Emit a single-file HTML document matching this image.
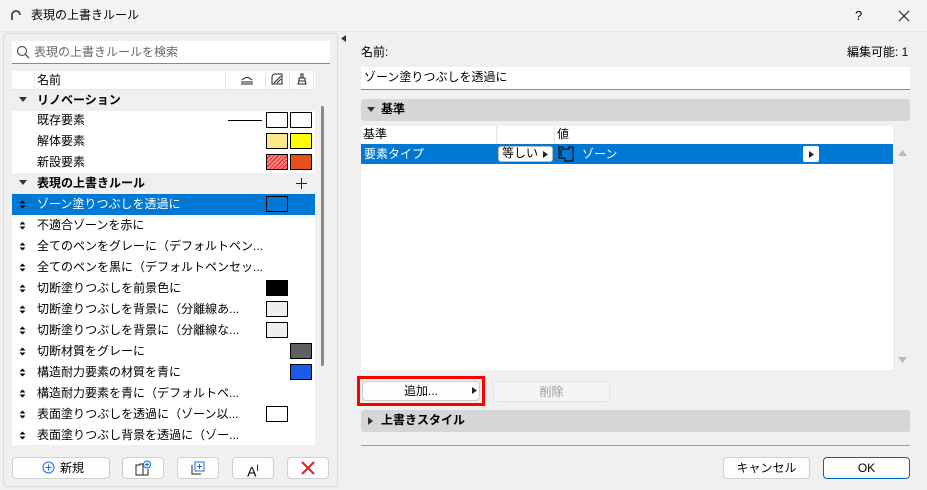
<!DOCTYPE html>
<html><head><meta charset="utf-8"><style>
*{box-sizing:border-box;margin:0;padding:0}
body{width:927px;height:490px;overflow:hidden;background:#f0f0f0;font-family:"Liberation Sans","Noto Sans CJK JP",sans-serif;font-size:12px;color:#000;position:relative}
.a{position:absolute}
.t{position:absolute;white-space:nowrap;line-height:21px}
.row{position:absolute;left:12px;width:303px;height:21px}
.sw{position:absolute;width:22px;height:16px;border:1px solid #000}
.btn{position:absolute;background:#fdfdfd;border:1px solid #d0d0d0;border-radius:4px;text-align:center;line-height:20px}
.ud{position:absolute;left:19px;width:7px;height:9px}
</style></head><body>
<svg width="0" height="0" style="position:absolute"><defs><symbol id="ud" viewBox="0 0 7 9"><path d="M0.5 3.5L3.5 0.5L6.5 3.5Z M0.5 5.5L3.5 8.5L6.5 5.5Z" fill="#000"/></symbol></defs></svg>
<!-- title bar -->
<div class="a" style="left:0;top:0;width:927px;height:32px;background:#f3f3f3;border-bottom:1px solid #e6e6e6"></div>
<svg class="a" style="left:10px;top:9px" width="12" height="12"><path d="M2 11 V6 A4 4 0 0 1 10 6" fill="none" stroke="#444" stroke-width="1.8"/></svg>
<div class="t" style="left:31px;top:5px">表現の上書きルール</div>
<div class="t" style="left:855px;top:5px;font-size:13px">?</div>
<svg class="a" style="left:898px;top:10px" width="12" height="12"><path d="M1 1L11 11M11 1L1 11" stroke="#222" stroke-width="1.2"/></svg>

<!-- left panel -->
<div class="a" style="left:3px;top:33px;width:335px;height:454px;border:1px solid #dadada;border-radius:4px;background:#f0f0f0"></div>
<div class="a" style="left:12px;top:41px;width:318px;height:23px;background:#fff;border-bottom:1px solid #888"></div>
<svg class="a" style="left:16px;top:45px" width="14" height="14"><circle cx="6" cy="6" r="4.5" fill="none" stroke="#555" stroke-width="1.2"/><path d="M9.5 9.5L13 13" stroke="#555" stroke-width="1.3"/></svg>
<div class="t" style="left:34px;top:42px;color:#666">表現の上書きルールを検索</div>
<div class="a" style="left:12px;top:71px;width:303px;height:374px;background:#fff"></div>
<div class="a" style="left:12px;top:71px;width:303px;height:19px;background:#fff;border-bottom:1px solid #e5e5e5"></div>
<div class="a" style="left:34px;top:71px;width:1px;height:19px;background:#e5e5e5"></div>
<div class="a" style="left:225px;top:71px;width:1px;height:19px;background:#e5e5e5"></div>
<div class="a" style="left:265px;top:71px;width:1px;height:19px;background:#e5e5e5"></div>
<div class="a" style="left:289px;top:71px;width:1px;height:19px;background:#e5e5e5"></div>
<div class="a" style="left:313px;top:71px;width:1px;height:19px;background:#e5e5e5"></div>
<div class="t" style="left:37px;top:70px">名前</div>
<svg class="a" style="left:240px;top:74px" width="14" height="11"><path d="M2 6Q7 1 12 6M1 8H13M1 10H13" fill="none" stroke="#222" stroke-width="1"/></svg>
<svg class="a" style="left:271px;top:73px" width="12" height="12"><path d="M1 11V4A3 3 0 0 1 4 1H11V11Z M3 10L10 3M6 10L10 6" fill="none" stroke="#222" stroke-width="1"/></svg>
<svg class="a" style="left:297px;top:73px" width="10" height="12"><path d="M4 1H6V5H4Z M2 5H8V8H2Z M2 8L1 11H9L8 8" fill="none" stroke="#222" stroke-width="1"/></svg>

<div class="row" style="top:90px;background:#efefef"></div>
<svg class="a" style="left:19px;top:97px" width="8" height="6"><path d="M0 0H8L4 5Z" fill="#333"/></svg>
<div class="t" style="left:37px;top:90px;font-weight:bold">リノベーション</div>
<div class="t" style="left:37px;top:110px">既存要素</div>
<div class="a" style="left:228px;top:120px;width:34px;height:1px;background:#000"></div>
<div class="sw" style="left:266px;top:112px;background:#fff"></div><div class="sw" style="left:290px;top:112px;background:#fff"></div>
<div class="t" style="left:37px;top:131px">解体要素</div>
<div class="sw" style="left:266px;top:133px;background:#fbe98a"></div><div class="sw" style="left:290px;top:133px;background:#ffff00"></div>
<div class="t" style="left:37px;top:152px">新設要素</div>
<div class="sw" style="left:266px;top:154px;background:repeating-linear-gradient(135deg,#ff8080 0 2px,#e02020 2px 3px)"></div><div class="sw" style="left:290px;top:154px;background:#e8501a"></div>
<div class="row" style="top:173px;background:#efefef"></div>
<svg class="a" style="left:19px;top:180px" width="8" height="6"><path d="M0 0H8L4 5Z" fill="#333"/></svg>
<div class="t" style="left:37px;top:173px;font-weight:bold">表現の上書きルール</div>
<svg class="a" style="left:296px;top:178px" width="11" height="11"><path d="M5.5 0V11M0 5.5H11" stroke="#222" stroke-width="1"/></svg>
<div class="row" style="top:194px;background:#0078d4"></div>
<svg class="ud" style="top:200px"><use href="#ud"/></svg>
<div class="t" style="left:37px;top:194px;color:#fff">ゾーン塗りつぶしを透過に</div>
<div class="sw" style="left:266px;top:196px;background:#0078d4"></div>

<svg class="ud" style="top:221px"><use href="#ud"/></svg><div class="t" style="left:37px;top:215px">不適合ゾーンを赤に</div>
<svg class="ud" style="top:242px"><use href="#ud"/></svg><div class="t" style="left:37px;top:236px">全てのペンをグレーに（デフォルトペン...</div>
<svg class="ud" style="top:263px"><use href="#ud"/></svg><div class="t" style="left:37px;top:257px">全てのペンを黒に（デフォルトペンセッ...</div>
<svg class="ud" style="top:284px"><use href="#ud"/></svg><div class="t" style="left:37px;top:278px">切断塗りつぶしを前景色に</div>
<div class="sw" style="left:266px;top:280px;background:#000"></div>
<svg class="ud" style="top:305px"><use href="#ud"/></svg><div class="t" style="left:37px;top:299px">切断塗りつぶしを背景に（分離線あ...</div>
<div class="sw" style="left:266px;top:301px;background:#eee"></div>
<svg class="ud" style="top:326px"><use href="#ud"/></svg><div class="t" style="left:37px;top:320px">切断塗りつぶしを背景に（分離線な...</div>
<div class="sw" style="left:266px;top:322px;background:#eee"></div>
<svg class="ud" style="top:347px"><use href="#ud"/></svg><div class="t" style="left:37px;top:341px">切断材質をグレーに</div>
<div class="sw" style="left:290px;top:343px;background:#606060"></div>
<svg class="ud" style="top:368px"><use href="#ud"/></svg><div class="t" style="left:37px;top:362px">構造耐力要素の材質を青に</div>
<div class="sw" style="left:290px;top:364px;background:#1a5ce8"></div>
<svg class="ud" style="top:389px"><use href="#ud"/></svg><div class="t" style="left:37px;top:383px">構造耐力要素を青に（デフォルトペ...</div>
<svg class="ud" style="top:410px"><use href="#ud"/></svg><div class="t" style="left:37px;top:404px">表面塗りつぶしを透過に（ゾーン以...</div>
<div class="sw" style="left:266px;top:406px;background:#fff"></div>
<svg class="ud" style="top:431px"><use href="#ud"/></svg><div class="t" style="left:37px;top:425px">表面塗りつぶし背景を透過に（ゾー...</div>
<div class="a" style="left:321px;top:106px;width:3px;height:260px;background:#8a8a8a;border-radius:2px"></div>

<div class="btn" style="left:12px;top:457px;width:98px;height:22px;padding-left:4px"><svg width="13" height="13" style="vertical-align:-2px;margin-right:5px"><circle cx="6.5" cy="6.5" r="5.5" fill="none" stroke="#1a6ee0"/><path d="M6.5 3.5V9.5M3.5 6.5H9.5" stroke="#1a6ee0"/></svg>新規</div>
<div class="btn" style="left:122px;top:457px;width:42px;height:22px"><svg width="16" height="16" style="margin-top:2px"><path d="M1 5H5V4H8V15H1Z" fill="none" stroke="#222"/><path d="M1 15H13V9" fill="none" stroke="#222"/><circle cx="12" cy="4.5" r="3.5" fill="none" stroke="#1a6ee0"/><path d="M12 2.5V6.5M10 4.5H14" stroke="#1a6ee0"/></svg></div>
<div class="btn" style="left:177px;top:457px;width:42px;height:22px"><svg width="16" height="16" style="margin-top:2px"><path d="M2 5V14H11" fill="none" stroke="#222"/><rect x="5" y="2" width="9" height="9" fill="none" stroke="#1a6ee0"/><path d="M9.5 4V9M7 6.5H12" stroke="#1a6ee0"/></svg></div>
<div class="btn" style="left:232px;top:457px;width:42px;height:22px;font-size:14px">A<sup style="font-size:9px">I</sup></div>
<div class="btn" style="left:287px;top:457px;width:42px;height:22px"><svg width="14" height="14" style="margin-top:3px"><path d="M1 1L13 13M13 1L1 13" stroke="#e02020" stroke-width="2"/></svg></div>

<!-- right panel -->
<svg class="a" style="left:341px;top:35px" width="5" height="7"><path d="M5 0V7L0 3.5Z" fill="#333"/></svg>
<div class="t" style="left:361px;top:42px">名前:</div>
<div class="t" style="left:847px;top:42px">編集可能: 1</div>
<div class="a" style="left:361px;top:67px;width:549px;height:23px;background:#fff;border-bottom:1px solid #888"></div>
<div class="t" style="left:364px;top:67px">ゾーン塗りつぶしを透過に</div>
<div class="a" style="left:361px;top:99px;width:549px;height:22px;background:#d6d6d6;border-radius:3px"></div>
<svg class="a" style="left:367px;top:107px" width="8" height="6"><path d="M0 0H8L4 5Z" fill="#333"/></svg>
<div class="t" style="left:381px;top:99px;font-weight:bold">基準</div>
<div class="a" style="left:361px;top:126px;width:532px;height:244px;background:#fff"></div>
<div class="a" style="left:496px;top:126px;width:1px;height:18px;background:#e5e5e5"></div>
<div class="a" style="left:554px;top:126px;width:1px;height:18px;background:#e5e5e5"></div>
<div class="t" style="left:363px;top:124px">基準</div>
<div class="t" style="left:557px;top:124px">値</div>
<div class="a" style="left:361px;top:144px;width:532px;height:20px;background:#0078d4"></div>
<div class="t" style="left:364px;top:144px;color:#fff">要素タイプ</div>
<div class="a" style="left:498px;top:146px;width:55px;height:16px;background:#fff;border-radius:3px;border:1px solid #bbb"></div>
<div class="t" style="left:502px;top:143px">等しい</div>
<svg class="a" style="left:543px;top:151px" width="5" height="7"><path d="M0 0V7L5 3.5Z" fill="#222"/></svg>
<svg class="a" style="left:558px;top:146px" width="16" height="16"><path d="M1 1H5V3H11V1H15V15H7V12H1Z M3 3V10" fill="none" stroke="#111" stroke-width="1.2"/></svg>
<div class="t" style="left:582px;top:144px;color:#fff">ゾーン</div>
<div class="a" style="left:803px;top:146px;width:16px;height:16px;background:#fff;border-radius:2px"></div>
<svg class="a" style="left:809px;top:151px" width="5" height="7"><path d="M0 0V7L5 3.5Z" fill="#222"/></svg>
<svg class="a" style="left:898px;top:150px" width="9" height="6"><path d="M0 6L4.5 0L9 6Z" fill="#bbb"/></svg>
<svg class="a" style="left:898px;top:357px" width="9" height="6"><path d="M0 0L4.5 6L9 0Z" fill="#bbb"/></svg>

<div class="a" style="left:357px;top:376px;width:128px;height:30px;border:3px solid #f00"></div>
<div class="btn" style="left:362px;top:381px;width:118px;height:20px;line-height:18px;border-color:#ccc">追加...</div>
<svg class="a" style="left:472px;top:387px" width="5" height="7"><path d="M0 0V7L5 3.5Z" fill="#222"/></svg>
<div class="btn" style="left:493px;top:381px;width:117px;height:21px;color:#999;background:#f4f4f4;border-color:#e2e2e2">削除</div>
<div class="a" style="left:361px;top:410px;width:549px;height:22px;background:#d6d6d6;border-radius:3px"></div>
<svg class="a" style="left:368px;top:417px" width="5" height="8"><path d="M0 0V8L5 4Z" fill="#333"/></svg>
<div class="t" style="left:381px;top:410px;font-weight:bold">上書きスタイル</div>
<div class="a" style="left:361px;top:445px;width:549px;height:1px;background:#a0a0a0"></div>
<div class="btn" style="left:723px;top:457px;width:87px;height:22px">キャンセル</div>
<div class="btn" style="left:823px;top:457px;width:87px;height:22px;border-color:#0067c0">OK</div>
</body></html>
